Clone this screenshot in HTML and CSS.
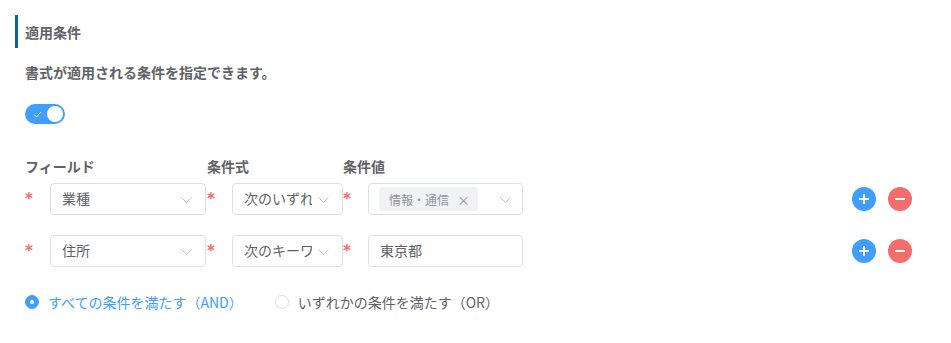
FILE: index.html
```html
<!DOCTYPE html>
<html lang="ja">
<head>
<meta charset="utf-8">
<title>適用条件</title>
<link rel="stylesheet" href="styles.css">
</head>
<body>
<div class="page">
  <div class="section-title">適用条件</div>
  <div class="content">
    <p class="desc">書式が適用される条件を指定できます。</p>
    <div class="switch">
      <svg class="switch-check" width="9" height="7" viewBox="0 0 9 7"><polyline points="1,3.5 3.5,6 8,1" fill="none" stroke="#ffffff" stroke-width="1" opacity="0.85"/></svg>
      <span class="switch-knob"></span>
    </div>

    <div class="labels">
      <div class="col col1 label">フィールド</div>
      <div class="col col2 label">条件式</div>
      <div class="col col3 label">条件値</div>
    </div>

    <div class="row">
      <div class="col col1">
        <span class="req">*</span>
        <div class="select w1"><span class="val">業種</span><svg class="arrow" width="11" height="6" viewBox="0 0 11 6"><polyline points="0.5,0.5 5.5,5.5 10.5,0.5" fill="none" stroke="#c0c4cc" stroke-width="1"/></svg></div>
      </div>
      <div class="col col2">
        <span class="req">*</span>
        <div class="select w2"><span class="val">次のいずれかを含む</span><svg class="arrow" width="11" height="6" viewBox="0 0 11 6"><polyline points="0.5,0.5 5.5,5.5 10.5,0.5" fill="none" stroke="#c0c4cc" stroke-width="1"/></svg></div>
      </div>
      <div class="col col3">
        <span class="req">*</span>
        <div class="select w3 multi"><span class="tag">情報・通信<span class="tag-close">×</span></span><svg class="arrow a3" width="11" height="6" viewBox="0 0 11 6"><polyline points="0.5,0.5 5.5,5.5 10.5,0.5" fill="none" stroke="#c0c4cc" stroke-width="1"/></svg></div>
      </div>
      <div class="actions">
        <span class="circle plus"><svg width="12" height="12" viewBox="0 0 12 12"><path d="M6 1v10M1 6h10" stroke="#fff" stroke-width="2"/></svg></span>
        <span class="circle minus"><svg width="12" height="12" viewBox="0 0 12 12"><path d="M1 6h10" stroke="#fff" stroke-width="2"/></svg></span>
      </div>
    </div>

    <div class="row">
      <div class="col col1">
        <span class="req">*</span>
        <div class="select w1"><span class="val">住所</span><svg class="arrow" width="11" height="6" viewBox="0 0 11 6"><polyline points="0.5,0.5 5.5,5.5 10.5,0.5" fill="none" stroke="#c0c4cc" stroke-width="1"/></svg></div>
      </div>
      <div class="col col2">
        <span class="req">*</span>
        <div class="select w2"><span class="val">次のキーワードを含む</span><svg class="arrow" width="11" height="6" viewBox="0 0 11 6"><polyline points="0.5,0.5 5.5,5.5 10.5,0.5" fill="none" stroke="#c0c4cc" stroke-width="1"/></svg></div>
      </div>
      <div class="col col3">
        <span class="req">*</span>
        <div class="select w3 input"><span class="val">東京都</span></div>
      </div>
      <div class="actions">
        <span class="circle plus"><svg width="12" height="12" viewBox="0 0 12 12"><path d="M6 1v10M1 6h10" stroke="#fff" stroke-width="2"/></svg></span>
        <span class="circle minus"><svg width="12" height="12" viewBox="0 0 12 12"><path d="M1 6h10" stroke="#fff" stroke-width="2"/></svg></span>
      </div>
    </div>

    <div class="radios">
      <label class="radio checked"><span class="radio-dot"></span><span class="radio-text">すべての条件を満たす（AND）</span></label>
      <label class="radio"><span class="radio-dot"></span><span class="radio-text">いずれかの条件を満たす（OR）</span></label>
    </div>
  </div>
</div>
</body>
</html>
```

FILE: styles.css
```css
* { box-sizing: border-box; }
html, body { margin: 0; padding: 0; background: #ffffff; }
body {
  font-family: "Noto Sans CJK JP", "Noto Sans", sans-serif;
  font-size: 14px;
  color: #606266;
}
.page { padding: 15px 0 0 15px; }
.section-title {
  height: 33px;
  border-left: 3px solid #0b64a0;
  padding-left: 7px;
  display: flex;
  align-items: center;
  font-weight: bold;
  font-size: 14px;
  color: #606266;
}
.content { padding: 0 39px 0 10px; }
.desc {
  margin: 14px 0 0 0;
  line-height: 20px;
  font-weight: bold;
  color: #606266;
}
.switch {
  margin-top: 22px;
  width: 40px;
  height: 20px;
  border-radius: 10px;
  background: #409eff;
  display: flex;
  align-items: center;
  justify-content: space-between;
  padding: 0 2px 0 8px;
}
.switch-check { display: block; }
.switch-knob {
  width: 16px;
  height: 16px;
  border-radius: 50%;
  background: #ffffff;
}
.labels {
  display: flex;
  margin-top: 32px;
  line-height: 20px;
}
.label { font-weight: bold; color: #606266; }
.col { display: flex; align-items: center; flex: none; }
.col1 { width: 182px; }
.col2 { width: 136px; }
.col3 { width: 180px; }
.row {
  display: flex;
  align-items: center;
  height: 32px;
  margin-top: 7px;
}
.row + .row { margin-top: 20px; }
.req {
  width: 25px;
  flex: none;
  color: #f56c6c;
  font-family: "DejaVu Sans", sans-serif;
  font-size: 15px;
  font-weight: bold;
  line-height: 20px;
  padding-left: 0;
  position: relative;
  top: 0;
}
.select {
  height: 32px;
  border: 1px solid #dcdfe6;
  border-radius: 4px;
  background: #fff;
  display: flex;
  align-items: center;
  padding-left: 11px;
  position: relative;
  overflow: hidden;
}
.w1 { width: 156px; }
.w2 { width: 111px; }
.w3 { width: 155px; }
.val {
  flex: 1;
  min-width: 0;
  white-space: nowrap;
  overflow: hidden;
  color: #606266;
  font-size: 14px;
  line-height: 20px;
  margin-right: 30px;
  position: relative;
  top: -1px;
}
.input .val { margin-right: 8px; }
.arrow {
  position: absolute;
  right: 13px;
  top: 13px;
}
.a3 { right: 11px; }
.multi { padding-left: 10px; }
.tag {
  height: 24px;
  background: #f0f2f5;
  border-radius: 4px;
  color: #909399;
  font-size: 12px;
  display: flex;
  align-items: center;
  padding: 0 8px 0 10px;
  white-space: nowrap;
}
.tag-close {
  margin-left: 8px;
  font-size: 13px;
  color: #909399;
}
.actions {
  margin-left: auto;
  display: flex;
  gap: 12px;
}
.circle {
  width: 24px;
  height: 24px;
  border-radius: 50%;
  display: flex;
  align-items: center;
  justify-content: center;
}
.circle svg { display: block; }
.plus { background: #409eff; }
.minus { background: #f56c6c; }
.radios {
  display: flex;
  align-items: center;
  margin-top: 25px;
  height: 20px;
}
.radio {
  display: flex;
  align-items: center;
  margin-right: 32px;
  color: #606266;
}
.radio-dot {
  width: 14px;
  height: 14px;
  border-radius: 50%;
  border: 1px solid #dcdfe6;
  background: #fff;
  margin-right: 9px;
  flex: none;
  position: relative;
}
.checked .radio-dot {
  border-color: #409eff;
  background: #409eff;
}
.checked .radio-dot::after {
  content: "";
  position: absolute;
  width: 4px;
  height: 4px;
  border-radius: 50%;
  background: #fff;
  left: 4px;
  top: 4px;
}
.checked .radio-text { color: #409eff; }
.radio-text { line-height: 20px; white-space: nowrap; }
```
